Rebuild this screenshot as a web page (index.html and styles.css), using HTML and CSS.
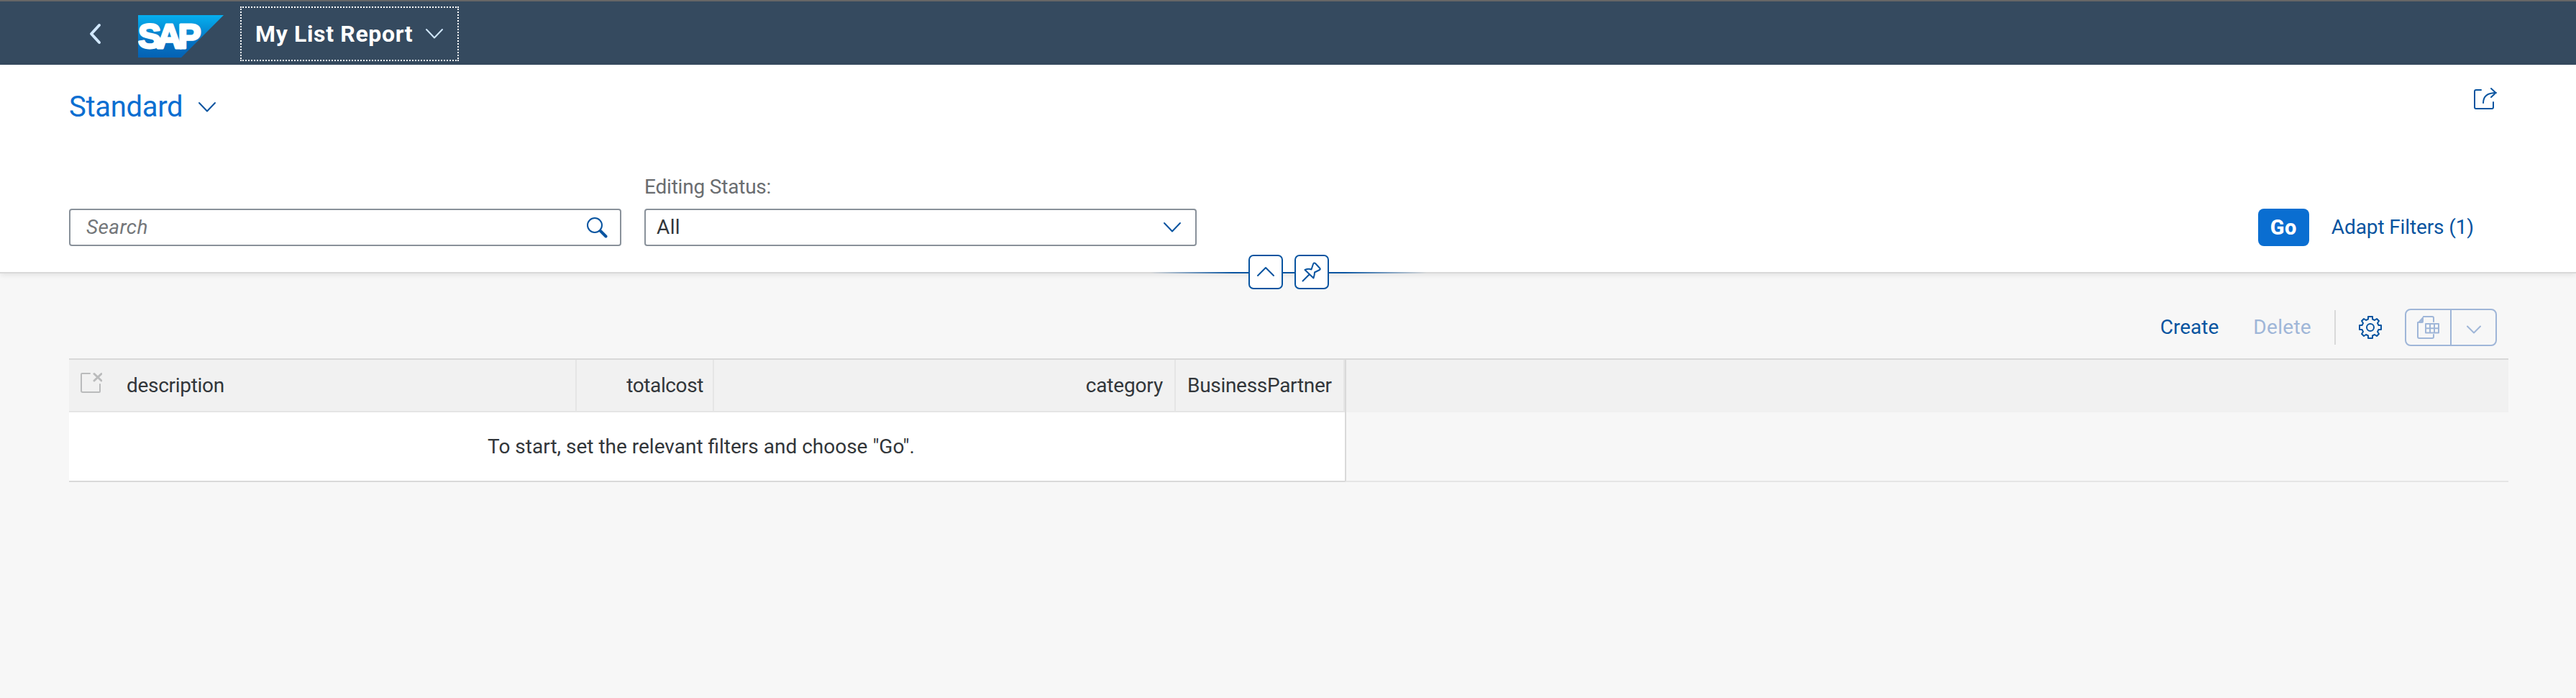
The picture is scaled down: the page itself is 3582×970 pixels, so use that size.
FILE: index.html
```html
<!DOCTYPE html>
<html lang="en">
<head>
<meta charset="utf-8">
<title>My List Report</title>
<link rel="stylesheet" href="styles.css">
</head>
<body>
<header class="shell">
  <svg class="back" width="20" height="32" viewBox="0 0 20 32"><path d="M16 4 5 16l11 12" /></svg>
  <svg class="logo" width="119" height="60" viewBox="0 0 119 60">
    <defs><linearGradient id="sap" x1="0" y1="0" x2="0" y2="1"><stop offset="0" stop-color="#06aff0"/><stop offset=".25" stop-color="#0598dd"/><stop offset=".6" stop-color="#0574c4"/><stop offset="1" stop-color="#0562b4"/></linearGradient></defs>
    <path d="M0 0H119L60 59H0Z" fill="url(#sap)"/>
    <text class="logo-text" x="0 26 55.500" y="46">SAP</text>
  </svg>
  <button class="app-title"><span class="t-title">My List Report</span><svg class="chev" width="28" height="18" viewBox="0 0 28 18"><path d="M3 3 14 14.500 25 3"/></svg></button>
</header>
<section class="filters">
  <div class="variant-row">
    <button class="variant"><span class="t-standard">Standard</span><svg class="chev" width="28" height="18" viewBox="0 0 28 18"><path d="M3 3 14 14.500 25 3"/></svg></button>
    <svg class="share" width="34" height="32" viewBox="0 0 34 32"><path d="M11 4H4Q2 4 2 6V28Q2 30 4 30H26Q28 30 28 28V21M14 22C14 13 19 8 32 8M25 2l6.500 6-6.500 6"/></svg>
  </div>
  <div class="filter-row">
    <div class="search"><span class="t-search">Search</span><svg width="30" height="30" viewBox="0 0 30 30"><circle cx="12" cy="12" r="10"/><path class="handle" d="M20 20l7.500 7.500"/></svg></div>
    <div class="field"><label class="t-label">Editing Status:</label><div class="select"><span class="t-all">All</span><svg class="chev" width="28" height="18" viewBox="0 0 28 18"><path d="M3 3 14 14.500 25 3"/></svg></div></div>
    <div class="filter-actions"><button class="go">Go</button><button class="adapt">Adapt Filters (1)</button></div>
  </div>
  <div class="collapse">
    <button><svg width="28" height="28" viewBox="0 0 28 28"><path d="M3 19 14 8l11 11"/></svg></button>
    <button><svg width="28" height="28" viewBox="0 0 28 28"><path d="M1.500 26.500 11 17M4.500 11C8 9.500 11 9.500 13.500 10.500L16 3Q17 .500 19 2l6 6.500Q26.500 10 25 11l-7 3.500Q18 18 16.500 22.500Z"/></svg></button>
  </div>
</section>
<main>
  <div class="toolbar">
    <button class="create">Create</button>
    <button class="delete">Delete</button>
    <i class="divider"></i>
    <svg class="gear" width="34" height="34" viewBox="0 0 34 34"><path d="M14 2H20V5.500L23 7 26 5 29 8 27 11 28.500 14H32V20H28.500L27 23 29 26 26 29 23 27 20 28.500V32H14V28.500L11 27 8 29 5 26 7 23 5.500 20H2V14H5.500L7 11 5 8 8 5 11 7 14 5.500Z"/><circle cx="17" cy="17" r="5"/></svg>
    <div class="export">
      <div class="cell"><svg width="34" height="34" viewBox="0 0 34 34"><path d="M2 10V30Q2 32 4 32H22Q24 32 24 30V27M10 2H22Q24 2 24 4V9M13 12H31V24.500H13ZM19 12V24.500M25 12V24.500M13 18.200H31"/><path class="fold" d="M1 11 10 1V9Q10 11 8 11Z"/></svg></div>
      <div class="cell"><svg width="20" height="12" viewBox="0 0 20 12"><path d="M1 1.500 10 10.500 19 1.500"/></svg></div>
    </div>
  </div>
  <div class="table">
    <div class="thead">
      <div class="th desc"><svg width="32" height="32" viewBox="0 0 32 32"><path d="M15 4H4Q3 4 3 5V28Q3 30 5 30H28Q29 30 29 29V19"/><path class="x" d="M21 4.500 31 14M31 4.500 21 14"/></svg><span class="t-description">description</span></div>
      <div class="th cost"><span class="t-totalcost">totalcost</span></div>
      <div class="th cat"><span class="t-category">category</span></div>
      <div class="th partner"><span class="t-partner">BusinessPartner</span></div>
      <div class="rest"></div>
    </div>
    <div class="tbody"><div class="empty"><span class="t-empty">To start, set the relevant filters and choose "Go".</span></div><div class="rest"></div></div>
  </div>
</main>
</body>
</html>
```
FILE: styles.css
```css
* { box-sizing: border-box; }
body { margin: 0; min-height: 970px; background: #f7f7f7; color: #32363a; font: 28px/34px Roboto, "Liberation Sans", sans-serif; }
button { margin: 0; padding: 0; border: 0; background: none; color: inherit; font: inherit; letter-spacing: inherit; }
span, label { white-space: nowrap; }
svg { display: block; flex: none; fill: none; stroke: currentColor; stroke-width: 2; stroke-linecap: round; stroke-linejoin: round; }
.shell { display: flex; align-items: center; height: 90px; padding: 0 0 0 122px; border-top: 2px solid #666; background: #354a5f; color: #d1e8ff; }
.back { margin-top: 2px; stroke-width: 4; }
.logo { margin: 10px 0 0 50px; stroke: none; }
.logo-text { fill: #fff; stroke: #fff; stroke-width: 3px; font: bold 48px "Liberation Sans", sans-serif; }
.app-title { display: flex; align-items: center; width: 304px; height: 76px; margin: 2px 0 0 23px; padding: 0 18px 0 19px; border: 2px dotted #fff; text-align: left; }
.t-title { flex: 1; color: #fff; font-size: 32px; font-weight: 700; letter-spacing: .65px; }
.filters { position: relative; height: 290px; padding: 0 96px; border-bottom: 2px solid #d9d9d9; background: #fff; box-shadow: 0 2px 8px rgba(0,0,0,.09); color: #0854a0; }
.variant-row { display: flex; justify-content: space-between; align-items: flex-start; padding: 31px 13px 0 0; }
.variant { display: flex; align-items: center; gap: 20px; height: 56px; }
.t-standard { color: #0a6ed1; font-size: 40px; letter-spacing: -.3px; }
.filter-row { display: flex; align-items: flex-end; gap: 32px; height: 165px; }
.search, .select { display: flex; align-items: center; justify-content: space-between; width: 768px; height: 52px; border: 2px solid #89919a; border-radius: 4px; background: #fff; }
.search { padding: 0 17px 0 22px; }
.t-search { color: #74777a; font-style: italic; letter-spacing: .4px; }
.handle { stroke-width: 4; }
.t-label { display: block; margin-bottom: 13px; color: #6a6d70; letter-spacing: -.2px; }
.select { padding: 0 18px 0 15px; }
.t-all { color: #32363a; letter-spacing: .4px; }
.filter-actions { display: flex; gap: 31px; margin-left: auto; padding-right: 46px; }
.go { width: 71px; height: 52px; border-radius: 8px; background: #0a6ed1; color: #fff; font-size: 29px; font-weight: 800; letter-spacing: .5px; }
.adapt { letter-spacing: -.12px; }
.collapse { position: absolute; left: 50%; top: 264px; display: flex; justify-content: center; gap: 16px; width: 384px; margin-left: -191px; background: linear-gradient(90deg, transparent, #0854a0 30%, #0854a0 70%, transparent) 0 24px / 100% 2px no-repeat; }
.collapse button { display: grid; place-items: center; width: 48px; height: 48px; border: 2px solid #0854a0; border-radius: 7px; background: #fff; }
main { padding: 49px 94px 0 96px; }
.toolbar { display: flex; align-items: center; justify-content: flex-end; height: 52px; padding-right: 16px; color: #0854a0; }
.delete { margin-left: 48px; color: #9fb6d8; letter-spacing: .3px; }
.divider { width: 2px; height: 48px; margin: 0 31px 0 32px; background: #d9d9d9; }
.export { display: flex; width: 128px; height: 52px; margin-left: 31px; border: 2px solid #9fb6d8; border-radius: 8px; color: #9fb6d8; }
.cell { display: grid; place-items: center; flex: 1; }
.cell + .cell { border-left: 2px solid #9fb6d8; padding-top: 6px; }
.fold { fill: currentColor; stroke: none; }
.table { width: 3392px; margin-top: 17px; border-top: 2px solid #d9d9d9; }
.thead { display: flex; height: 73px; background: #f1f1f1; }
.th { display: flex; align-items: center; border-right: 2px solid #e5e5e5; border-bottom: 2px solid #e5e5e5; }
.desc { width: 706px; padding-left: 14px; gap: 34px; }
.desc svg { color: #babbbc; margin-top: -10px; }
.x { stroke-width: 3; }
.t-description, .t-partner { letter-spacing: -.3px; }
.cost { width: 191px; justify-content: flex-end; padding-right: 13px; }
.t-totalcost { letter-spacing: -.4px; }
.cat { width: 642px; justify-content: flex-end; padding-right: 16px; letter-spacing: -.15px; }
.partner { width: 235px; padding-left: 16px; }
.rest { flex: 1; border-left: 2px solid #d9d9d9; }
.tbody { display: flex; height: 97px; }
.empty { display: grid; place-items: center; width: 1774px; padding-right: 16px; border-bottom: 2px solid #d9d9d9; background: #fff; }
.tbody .rest { border-bottom: 2px solid #e5e5e5; }
```
